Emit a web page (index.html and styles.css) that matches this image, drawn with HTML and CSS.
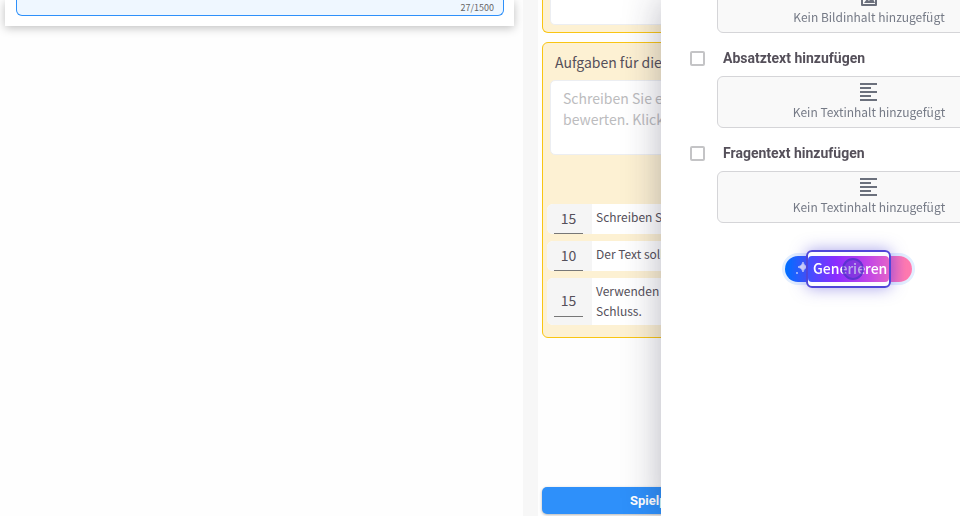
FILE: index.html
```html
<!DOCTYPE html>
<html lang="de">

<head>
    <meta charset="UTF-8">
    <meta name="viewport" content="width=device-width, initial-scale=1.0">
    <title>Aufgaben</title>
    <link rel="stylesheet" href="styles.css">
</head>

<body>
    <div class="page">
        <main class="editor">
            <div class="editor-card">
                <div class="prompt">
                    <textarea class="prompt-text" aria-label="Eingabe"></textarea>
                    <span class="counter">27/1500</span>
                </div>
            </div>
        </main>

        <div class="gutter"></div>

        <section class="tasks">
            <div class="panel panel-top">
                <textarea class="panel-text" aria-label="Anweisung"></textarea>
            </div>

            <div class="panel panel-tasks">
                <label class="panel-title" for="aufgaben">Aufgaben für die KI</label>
                <textarea id="aufgaben" class="panel-text" placeholder="Schreiben Sie eine Aufgabe, um den Text zu&#10;bewerten. Klicken Sie auf Hinzufügen."></textarea>
                <div class="criteria">
                    <div class="criterion">
                        <div class="points"><input type="text" value="15" aria-label="Punkte"></div>
                        <p>Schreiben Sie einen Text.</p>
                    </div>
                    <div class="criterion">
                        <div class="points"><input type="text" value="10" aria-label="Punkte"></div>
                        <p>Der Text soll klar sein.</p>
                    </div>
                    <div class="criterion">
                        <div class="points"><input type="text" value="15" aria-label="Punkte"></div>
                        <p>Verwenden Sie Einleitung und<br>Schluss.</p>
                    </div>
                </div>
            </div>

            <button class="play" type="button">Spielplatz</button>
        </section>
    </div>

    <aside class="drawer">
        <div class="option">
            <div class="content-box">
                <svg class="icon" viewBox="0 0 18 18">
                    <path d="M2 1h14v16H2z" fill="none" stroke="currentColor" stroke-width="2" stroke-linejoin="round" />
                    <path d="M4 15l3-4 2 2 3-4 3 6z" fill="currentColor" />
                </svg>
                <span>Kein Bildinhalt hinzugefügt</span>
            </div>
        </div>

        <div class="option">
            <label class="option-label"><input type="checkbox">Absatztext hinzufügen</label>
            <div class="content-box">
                <svg class="icon" viewBox="0 0 18 18">
                    <path d="M0 1h17M0 5h11M0 9h17M0 13h11M0 17h17" fill="none" stroke="currentColor" stroke-width="2" />
                </svg>
                <span>Kein Textinhalt hinzugefügt</span>
            </div>
        </div>

        <div class="option">
            <label class="option-label"><input type="checkbox">Fragentext hinzufügen</label>
            <div class="content-box">
                <svg class="icon" viewBox="0 0 18 18">
                    <path d="M0 1h17M0 5h11M0 9h17M0 13h11M0 17h17" fill="none" stroke="currentColor" stroke-width="2" />
                </svg>
                <span>Kein Textinhalt hinzugefügt</span>
            </div>
        </div>

        <button class="generate" type="button">
            <svg class="sparkle" viewBox="0 0 14 14">
                <path d="M8 1Q8.800 5.200 13 6Q8.800 6.800 8 11Q7.200 6.800 3 6Q7.200 5.200 8 1z" fill="#fff" fill-opacity=".85" stroke="#fff" stroke-opacity=".6" />
                <circle cx="2" cy="12" r="1" fill="#fff" fill-opacity=".7" />
            </svg>
            Generieren
            <span class="focus-frame"></span>
            <span class="click-dot"></span>
        </button>
    </aside>
</body>

</html>
```
FILE: styles.css
```css
* {
    box-sizing: border-box;
}

body {
    margin: 0;
    overflow: hidden;
    font-family: "Noto Sans CJK SC", "Open Sans", sans-serif;
    font-size: 12px;
    line-height: 20px;
    color: #55505a;
    background-color: #fefefe;
}

textarea,
input,
button {
    font-family: inherit;
    color: inherit;
}

textarea {
    display: block;
    width: 100%;
    resize: none;
    outline: none;
}

p {
    margin: 0;
}

.page {
    display: grid;
    grid-template-columns: 523px 15px 1fr;
    min-height: 100vh;
}

/* left column */
.editor {
    padding: 0 9px 0 5px;
}

.editor-card {
    padding: 0 10px 10px 11px;
    background-color: #fff;
    box-shadow: 0 2px 10px rgba(0, 0, 0, 0.25);
}

.prompt {
    display: flex;
    height: 16px;
    border: 1px solid #2e90fa;
    border-top: 0;
    border-radius: 0 0 6px 6px;
    background-color: #eff7ff;
}

.prompt-text {
    flex: 1;
    height: 12px;
    padding: 0;
    border: 0;
    background: transparent;
}

.counter {
    padding-right: 9px;
    font-size: 9px;
    line-height: 16px;
    color: #666;
}

.gutter {
    background-color: #f7f7f7;
}

/* tasks column */
.tasks {
    display: flex;
    flex-direction: column;
    min-width: 0;
    padding: 0 4px 2px;
    white-space: nowrap;
}

.panel {
    padding: 8px;
    border: 1px solid #f9c513;
    border-radius: 6px;
    background-color: #fdf1d3;
}

.panel-top {
    padding: 0 7px 7px;
    border-top: 0;
    border-radius: 0 0 6px 6px;
    margin-bottom: 9px;
}

.panel-top .panel-text {
    height: 25px;
    border-top: 0;
    border-radius: 0 0 5px 5px;
}

.panel-tasks {
    padding: 9px 4px 12px;
}

.panel-title {
    display: block;
    padding: 0 8px;
    margin-bottom: 8px;
    font-size: 14px;
}

.panel-text {
    height: 75px;
    padding: 7px 12px;
    border: 1px solid #eceef2;
    border-radius: 5px;
    background-color: #fff;
    font-size: 14px;
    line-height: 21px;
    white-space: pre;
    overflow: hidden;
}

.panel-tasks .panel-text {
    width: calc(100% - 6px);
    margin: 0 3px 49px;
}

.panel-text::placeholder {
    color: #bcbcbe;
    opacity: 1;
}

.criteria {
    display: flex;
    flex-direction: column;
    gap: 7px;
}

.criterion {
    display: flex;
    border-radius: 6px;
    background-color: #fff;
    overflow: hidden;
}

.criterion p {
    padding: 3px 4px;
    line-height: 20px;
}

.criterion:not(:last-child) p {
    height: 30px;
}

.criterion:last-child {
    height: 47px;
}

.points {
    display: flex;
    align-items: center;
    width: 45px;
    padding: 0 9px 0 7px;
    background-color: #f5f5f5;
}

.points input {
    width: 100%;
    height: 30px;
    padding: 0 0 2px;
    border: 0;
    border-bottom: 1px solid #777;
    background: transparent;
    font-size: 14px;
    text-align: center;
}

.play {
    height: 27px;
    margin-top: auto;
    padding: 0 88px;
    border: 0;
    border-radius: 5px;
    background-color: #2e90fa;
    box-shadow: 0 1px 3px rgba(0, 0, 0, 0.3);
    font-family: Roboto, sans-serif;
    font-size: 13px;
    font-weight: bold;
    text-align: left;
    color: #fff;
}

/* drawer, runs past the right side of the window */
.drawer {
    position: fixed;
    top: 0;
    bottom: 0;
    right: -76px;
    width: 375px;
    padding: 0 15px 0 29px;
    background-color: #fff;
    box-shadow: 0 0 36px rgba(30, 30, 60, 0.32);
}

.option-label {
    display: flex;
    align-items: center;
    gap: 18px;
    height: 20px;
    margin: 15px 0 8px;
    font-family: Roboto, sans-serif;
    font-size: 14px;
    font-weight: bold;
}

.option-label input {
    appearance: none;
    width: 15px;
    height: 15px;
    margin: 0;
    border: 2px solid #c4c4c6;
    border-radius: 2px;
    background-color: #fff;
}

.content-box {
    display: flex;
    flex-direction: column;
    align-items: center;
    height: 52px;
    margin-left: 27px;
    padding-top: 6px;
    border: 1px solid #d5d5d8;
    border-radius: 6px;
    background-color: #f9f9f9;
    color: #757a86;
}

.option:first-child .content-box {
    margin-top: -19px;
}

.icon {
    width: 18px;
    height: 18px;
    margin-bottom: 1px;
    color: #6b707c;
}

.generate {
    position: relative;
    display: flex;
    align-items: center;
    gap: 4px;
    width: 127px;
    height: 26px;
    margin: 33px auto 0 95px;
    padding: 0 10px 2px;
    border: 0;
    border-radius: 13px;
    background: linear-gradient(90deg, #0070ff 0%, #8a2cff 40%, #c044e8 65%, #ff7ab0 95%);
    box-shadow: 0 0 0 3px #e2eeff;
    font-size: 14px;
    font-weight: 500;
    color: #fff;
}

.sparkle {
    flex: none;
    width: 14px;
    height: 14px;
}

/* highlight round the button text */
.focus-frame {
    position: absolute;
    top: -6px;
    left: 21px;
    width: 85px;
    height: 38px;
    border: 2px solid #4f46d8;
    border-radius: 6px;
    box-shadow: 0 0 16px rgba(79, 70, 216, 0.5), inset 0 4px #fcfcff, inset 0 -4px #fcfcff;
}

.click-dot {
    position: absolute;
    top: 2px;
    left: 57px;
    width: 22px;
    height: 22px;
    border: 2px solid rgba(79, 50, 200, 0.7);
    border-radius: 50%;
    background-color: rgba(79, 50, 200, 0.4);
}
```
